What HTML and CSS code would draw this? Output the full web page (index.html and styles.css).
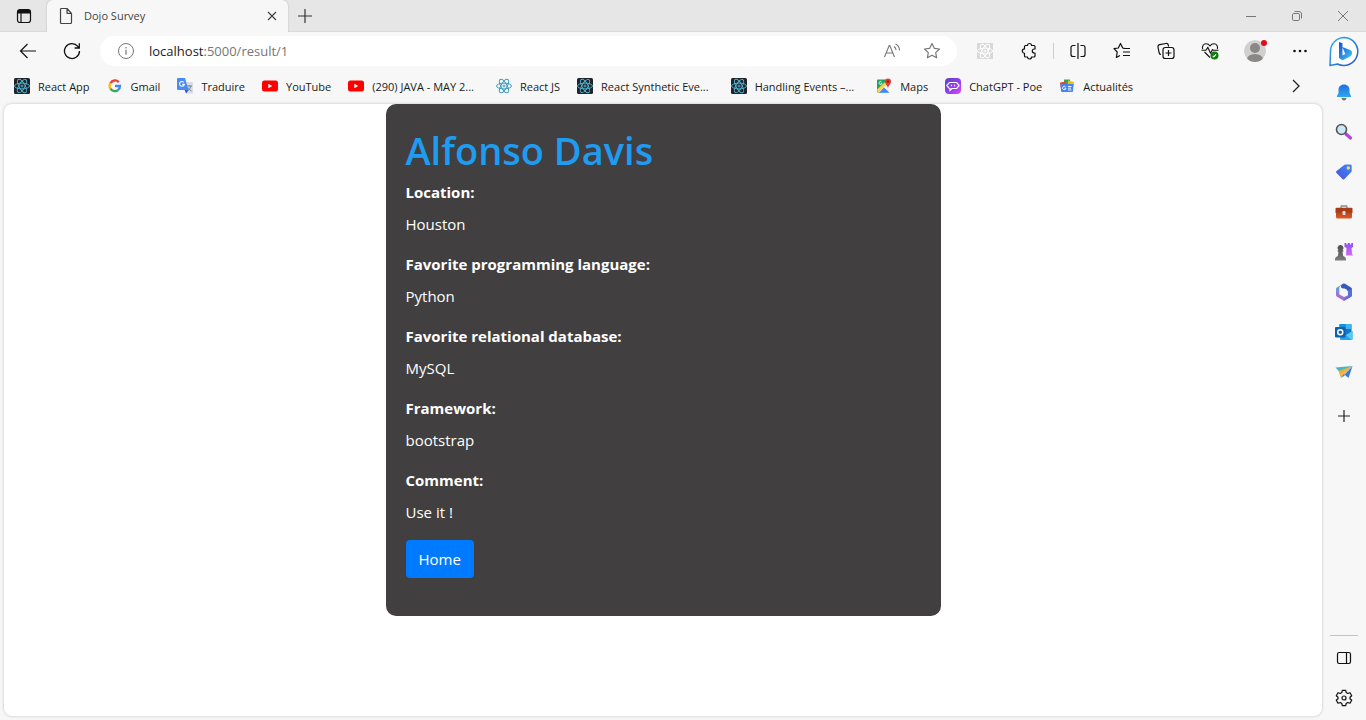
FILE: index.html
```html
<!DOCTYPE html>
<html lang="en">
<head>
<meta charset="utf-8">
<title>Dojo Survey</title>
<link rel="stylesheet" href="styles.css">
</head>
<body>
<svg class="defs" aria-hidden="true">
  <defs>
    <g id="atom" fill="none">
      <ellipse cx="8" cy="8" rx="7.500" ry="2.900"/>
      <ellipse cx="8" cy="8" rx="7.500" ry="2.900" transform="rotate(60 8 8)"/>
      <ellipse cx="8" cy="8" rx="7.500" ry="2.900" transform="rotate(120 8 8)"/>
      <circle cx="8" cy="8" r="1"/>
    </g>
    <g id="react-dark"><rect width="16" height="16" rx="1.500" fill="#20232a"/><use href="#atom" stroke="#53b4d0" stroke-width=".9"/></g>
    <g id="youtube"><rect y="2.500" width="16" height="11" rx="2.500" fill="#f00"/><path d="M6.300 5.700v4.600L10.300 8z" fill="#fff"/></g>
    <linearGradient id="bing-ring" x1="0" y1="0" x2="1" y2="1"><stop stop-color="#2fb4e8"/><stop offset="1" stop-color="#2952cc"/></linearGradient>
    <linearGradient id="bing-b" x1="0" y1="0" x2="1" y2="1"><stop stop-color="#1a4fc4"/><stop offset=".5" stop-color="#2b8ae6"/><stop offset="1" stop-color="#3fd0ee"/></linearGradient>
    <linearGradient id="blue" x1="0" y1="0" x2="0" y2="1"><stop stop-color="#1f6fe0"/><stop offset="1" stop-color="#2da7ee"/></linearGradient>
    <linearGradient id="tag" x1="1" y1="0" x2="0" y2="1"><stop stop-color="#3f8cf5"/><stop offset="1" stop-color="#4a4fe0"/></linearGradient>
    <linearGradient id="poe" x1="0" y1="0" x2="1" y2="1"><stop stop-color="#5b45c9"/><stop offset=".6" stop-color="#9a3cf0"/><stop offset="1" stop-color="#e04bf0"/></linearGradient>
    <linearGradient id="rook" x1="0" y1="0" x2="0" y2="1"><stop stop-color="#8d4df0"/><stop offset="1" stop-color="#d36bf5"/></linearGradient>
    <linearGradient id="pawn" x1="0" y1="0" x2="0" y2="1"><stop stop-color="#4d4d4d"/><stop offset="1" stop-color="#7c7c7c"/></linearGradient>
    <linearGradient id="case" x1="0" y1="0" x2="0" y2="1"><stop stop-color="#b8461f"/><stop offset="1" stop-color="#dc5a22"/></linearGradient>
  </defs>
</svg>
<div class="browser">
  <header class="titlebar">
    <button class="tab-actions" aria-label="Tab actions"><svg width="16" height="16" viewBox="0 0 16 16"><rect x="1.500" y="1.500" width="13" height="13" rx="2.500" fill="none" stroke="#111" stroke-width="1.200"/><path d="M1.500 5.500V4A2.500 2.500 0 0 1 4 1.500h8A2.500 2.500 0 0 1 14.500 4v1.500z" fill="#111"/><path d="M5 5v9.500" stroke="#111" stroke-width="1.200"/></svg></button>
    <div class="tab">
      <svg width="16" height="18" viewBox="0 0 16 18" fill="none" stroke="#444" stroke-width="1.200" stroke-linejoin="round"><path d="M3.500 1.500H9l4.500 4.800v9.200a1 1 0 0 1-1 1h-9a1 1 0 0 1-1-1v-13a1 1 0 0 1 1-1zM9 1.500v4.800h4.500"/></svg>
      <span class="tab-title">Dojo Survey</span>
      <button class="tab-close" aria-label="Close tab"><svg width="10" height="10" viewBox="0 0 10 10" stroke="#444" stroke-width="1.200"><path d="M1 1l8 8M9 1L1 9"/></svg></button>
    </div>
    <button class="new-tab" aria-label="New tab"><svg width="14" height="14" viewBox="0 0 14 14" stroke="#333" stroke-width="1.200"><path d="M7 0v14M0 7h14"/></svg></button>
    <div class="window-controls">
      <button aria-label="Minimize"><svg width="12" height="12" viewBox="0 0 12 12" stroke="#777"><path d="M1 6.500h10"/></svg></button>
      <button aria-label="Restore"><svg width="12" height="12" viewBox="0 0 12 12" fill="none" stroke="#777"><rect x="1.500" y="3.500" width="7" height="7" rx="1.300"/><path d="M3.500 1.500H8a2.500 2.500 0 0 1 2.500 2.500v4.500"/></svg></button>
      <button aria-label="Close"><svg width="12" height="12" viewBox="0 0 12 12" stroke="#777"><path d="M1 1l10 10M11 1L1 11"/></svg></button>
    </div>
  </header>

  <div class="frame">
    <div class="main">
      <nav class="toolbar" aria-label="Navigation">
        <button class="tool" aria-label="Back"><svg width="18" height="16" viewBox="0 0 18 16" fill="none" stroke="#111" stroke-width="1.200"><path d="M17 8H1.500M8.500 1L1.500 8l7 7"/></svg></button>
        <button class="tool" aria-label="Refresh"><svg width="18" height="18" viewBox="0 0 18 18" fill="none" stroke="#111" stroke-width="1.300"><path d="M16.500 9A7.500 7.500 0 1 1 14.800 4.300L16 5.800M16.300 1.300V6h-4.700"/></svg></button>
        <div class="address">
          <svg width="18" height="18" viewBox="0 0 18 18" fill="none" stroke="#777"><circle cx="9" cy="9" r="7.500"/><path d="M9 7.800v5M9 5v1.400" stroke-width="1.200"/></svg>
          <div class="url" role="textbox" aria-label="Address" tabindex="0">localhost<span class="url-rest">:5000/result/1</span></div>
          <button aria-label="Read aloud"><svg width="18" height="16" viewBox="0 0 18 16" fill="none" stroke="#777" stroke-width="1.100"><path d="M1.500 14L6.200 2.500h.6L11.500 14M3.200 10h6.600M11 3.500Q13 5 13 7M12.500 1Q16.500 3 16.500 7.500"/></svg></button>
          <button aria-label="Add to favorites"><svg width="18" height="18" viewBox="0 0 18 18" fill="none" stroke="#777" stroke-width="1.200" stroke-linejoin="round"><path d="M9 1.500l2.300 4.800 5.200.7-3.800 3.600.9 5.200L9 13.300l-4.600 2.500.9-5.200L1.500 7l5.200-.7z"/></svg></button>
        </div>
        <button class="tool" aria-label="React Developer Tools"><svg width="16" height="16" viewBox="0 0 16 16"><rect width="16" height="16" fill="#d8d8d8"/><use href="#atom" stroke="#fff"/></svg></button>
        <button class="tool" aria-label="Extensions"><svg width="18" height="18" viewBox="0 0 18 18" fill="none" stroke="#111" stroke-width="1.200" stroke-linejoin="round"><path d="M5.500 3.500h2a2 2 0 0 1 4 0H14a1 1 0 0 1 1 1V7h-.7a2 2 0 0 0 0 4h.7v3a1 1 0 0 1-1 1h-2.500a2 2 0 0 1-4 0h-2a1 1 0 0 1-1-1v-2.700a2.200 2.200 0 0 1 0-4.400V4.500a1 1 0 0 1 1-1z"/></svg></button>
        <span class="divider"></span>
        <button class="tool" aria-label="Split screen"><svg width="18" height="16" viewBox="0 0 18 16" fill="none" stroke="#111" stroke-width="1.200"><path d="M9 0v16M6.500 2.500H4A2 2 0 0 0 2 4.500v7a2 2 0 0 0 2 2h2.500M11.500 2.500H14a2 2 0 0 1 2 2v7a2 2 0 0 1-2 2h-2.500"/></svg></button>
        <button class="tool" aria-label="Favorites"><svg width="18" height="18" viewBox="0 0 18 18" fill="none" stroke="#111" stroke-width="1.200" stroke-linejoin="round"><path d="M12.500 6.500L9.700 6 7.500 1.500 5.300 6l-4.300.7 3.200 3.300-.8 5.500L7 13.500M10.500 6.500H17M10 10h7M10 13.500h7"/></svg></button>
        <button class="tool" aria-label="Collections"><svg width="18" height="18" viewBox="0 0 18 18" fill="none" stroke="#111" stroke-width="1.200"><path d="M4 12.500A2 2 0 0 1 2.200 11L1 5a2 2 0 0 1 1.600-2.300L9 1.500a2 2 0 0 1 2.300 1.600l.3 1.400"/><rect x="6" y="5.500" width="11" height="11" rx="2.300"/><path d="M11.500 8v6M8.500 11h6"/></svg></button>
        <button class="tool" aria-label="Browser essentials"><svg width="18" height="18" viewBox="0 0 18 18" fill="none" stroke="#111" stroke-width="1.100" stroke-linejoin="round"><path d="M1.700 7C.8 4.500 2.300 1.800 5 1.800c2 0 3.200 1 4 2.200.8-1.200 2-2.200 4-2.200 2.700 0 4.200 2.700 3.300 5.200M3.500 10L9 15.500M.5 8.300H5l1.800-3 2.700 6 2-3.800.8.800H17.500"/><circle cx="13.500" cy="13.500" r="4" fill="#107c10" stroke="none"/><path d="M11.800 13.800l1 1 2.200-2.500" stroke="#fff"/></svg></button>
        <button class="tool profile" aria-label="Profile"><svg width="26" height="26" viewBox="-1 1 26 26"><clipPath id="face"><circle cx="12" cy="14" r="11"/></clipPath><g clip-path="url(#face)"><circle cx="12" cy="14" r="11" fill="#d2d0ce"/><circle cx="12" cy="11" r="5" fill="#8a8886"/><ellipse cx="12" cy="22.500" rx="8" ry="5.500" fill="#8a8886"/></g><circle cx="21" cy="6" r="3" fill="#e00b1c"/></svg></button>
        <button class="tool" aria-label="Settings and more"><svg width="16" height="4" viewBox="0 0 16 4" fill="#111"><circle cx="2.500" cy="2" r="1.300"/><circle cx="8" cy="2" r="1.300"/><circle cx="13.500" cy="2" r="1.300"/></svg></button>
      </nav>

      <nav class="bookmarks" aria-label="Favorites bar">
        <a href="#"><svg viewBox="0 0 16 16"><use href="#react-dark"/></svg>React App</a>
        <a href="#"><svg viewBox="0 0 16 16" fill="none" stroke-width="2.300"><path d="M3.500 5.300A5 5 0 0 1 11.800 4.200" stroke="#ea4335"/><path d="M3.500 5.200a5 5 0 0 0 0 5.600" stroke="#fbbc05"/><path d="M3.500 10.600A5 5 0 0 0 11.200 11.800" stroke="#34a853"/><path d="M8 8h5a5 5 0 0 1-1.900 3.900" stroke="#4285f4"/></svg>Gmail</a>
        <a href="#"><svg viewBox="0 0 16 16"><path d="M6 4h9a1 1 0 0 1 1 1v10.500H9z" fill="#dadce0"/><path d="M9.500 8h5.500M12.300 7v1M14 8q-1 3-3.500 5M11 9.500q1.500 2.500 3.500 3.500" fill="none" stroke="#5f7d9c" stroke-width=".9"/><path d="M1 0h7l3.500 12H1a1 1 0 0 1-1-1V1a1 1 0 0 1 1-1z" fill="#4a8af4"/><path d="M7.500 12h4L9.200 15.500z" fill="#3557c9"/><path d="M6.800 4.300A2.400 2.400 0 1 0 7.300 6.300H5" fill="none" stroke="#fff" stroke-width="1.100"/></svg>Traduire</a>
        <a href="#"><svg viewBox="0 0 16 16"><use href="#youtube"/></svg>YouTube</a>
        <a class="long" href="#"><svg viewBox="0 0 16 16"><use href="#youtube"/></svg>(290) JAVA - MAY 2...</a>
        <a href="#"><svg viewBox="0 0 16 16"><use href="#atom" stroke="#3f9dbb"/></svg>React JS</a>
        <a class="long" href="#"><svg viewBox="0 0 16 16"><use href="#react-dark"/></svg>React Synthetic Eve...</a>
        <a class="long" href="#"><svg viewBox="0 0 16 16"><use href="#react-dark"/></svg>Handling Events –...</a>
        <a href="#"><svg viewBox="0 0 16 16"><path d="M2 1.500h11v13H2a1 1 0 0 1-1-1v-11a1 1 0 0 1 1-1z" fill="#1ea362"/><path d="M1.500 14L13 3v12z" fill="#f1f1f1"/><path d="M1 11.500L9.500 3.500l2 2L2 15z" fill="#fbd24b"/><path d="M3 14.800L8 9.500l5.500 5.300z" fill="#4285f4"/><path d="M5.500 3.800a1.500 1.500 0 1 0 .5 1.400H4.700" fill="none" stroke="#fff" stroke-width=".8"/><path d="M12 10.500C11.500 7 9 6 9 3.500a3 3 0 0 1 6 0C15 6 12.500 7 12 10.500z" fill="#e53935"/><circle cx="12" cy="3.500" r="1.100" fill="#811411"/></svg>Maps</a>
        <a href="#"><svg viewBox="0 0 16 16"><rect width="16" height="16" rx="4" fill="url(#poe)"/><path d="M5 4.500h6a1.500 1.500 0 0 1 1.500 1.500 1.500 1.500 0 0 1 0 3A1.500 1.500 0 0 1 11 10.500H7L5 12.300v-1.800A1.500 1.500 0 0 1 3.500 9a1.500 1.500 0 0 1 0-3A1.500 1.500 0 0 1 5 4.500z" fill="none" stroke="#fff" stroke-width="1.200"/><path d="M6.500 6.700v1.600M9.500 6.700v1.600" stroke="#fff" stroke-width="1.200"/></svg>ChatGPT - Poe</a>
        <a href="#"><svg viewBox="0 0 16 16"><path d="M5 1.500h6v6H5z" fill="#34a853"/><path d="M1 4.500l6-1v6H1.500z" fill="#ea4335"/><path d="M9 2.500l6 1.500-.5 5H9z" fill="#fbbc05"/><path d="M1.500 6h13L14 13a1 1 0 0 1-1 1H3a1 1 0 0 1-1-1z" fill="#4285f4"/><path d="M6.500 8.800a1.700 1.700 0 1 0 .5 1.500H5.500M9 8.500h3.500M9 10.200h3M9 12h3.500" fill="none" stroke="#fff" stroke-width=".9"/></svg>Actualités</a>
        <button class="more" aria-label="More favorites"><svg width="8" height="14" viewBox="0 0 8 14" fill="none" stroke="#222" stroke-width="1.300"><path d="M1 1l6 6-6 6"/></svg></button>
      </nav>

      <main class="page">
        <div class="container">
          <section class="card">
            <h1>Alfonso Davis</h1>
            <dl>
              <dt>Location:</dt><dd>Houston</dd>
              <dt>Favorite programming language:</dt><dd>Python</dd>
              <dt>Favorite relational database:</dt><dd>MySQL</dd>
              <dt>Framework:</dt><dd>bootstrap</dd>
              <dt>Comment:</dt><dd>Use it !</dd>
            </dl>
            <a class="home" href="#">Home</a>
          </section>
        </div>
      </main>
    </div>

    <aside class="sidebar" aria-label="Sidebar">
      <button class="bing" aria-label="Bing Chat"><svg width="32" height="32" viewBox="0 0 32 32"><path d="M16.500 1.500A14 14 0 1 1 9.500 28L2 29.500 2.500 16A14 14 0 0 1 16.500 1.500z" fill="#fff" stroke="url(#bing-ring)" stroke-width="1.500" stroke-linejoin="round"/><path d="M11 6l3.500 1.300v12.200l2.800-1.500-2-4.700-1-2.300 8 3q1.800 1 1.800 3t-2 3.500l-7.600 3.800L11 22z" fill="url(#bing-b)"/></svg></button>
      <button aria-label="Notifications"><svg viewBox="0 0 18 18"><path d="M9 1.500c3.300 0 5.500 2.300 5.500 5.500v3l1.500 3a.7.700 0 0 1-.7 1H2.700A.7.700 0 0 1 2 13l1.500-3V7c0-3.200 2.200-5.500 5.500-5.500z" fill="url(#blue)"/><path d="M6.500 15h5a2.500 2.500 0 0 1-5 0z" fill="#69757c"/></svg></button>
      <button aria-label="Search"><svg viewBox="0 0 18 18"><path d="M11 11l4.500 4" stroke="#b344d6" stroke-width="3.200" stroke-linecap="round"/><circle cx="6.500" cy="6.500" r="5" fill="#c9e8fa" stroke="#555" stroke-width="1.600"/></svg></button>
      <button aria-label="Shopping"><svg viewBox="0 0 18 18"><path d="M10.500 1.500h5a1.200 1.200 0 0 1 1.200 1.200v5.200q0 .7-.5 1.200l-6.700 6.800q-1 1-2 0L1.500 10q-1-1 0-2l7.700-6q.5-.5 1.300-.5z" fill="url(#tag)"/><circle cx="13.300" cy="5" r="1.700" fill="#ffd45e"/></svg></button>
      <button aria-label="Tools"><svg viewBox="0 0 18 18"><path d="M6 5V3.700Q6 3 6.700 3h4.600q.7 0 .7.700V5" fill="none" stroke="#888" stroke-width="1.300"/><path d="M1.500 4.700h15a1 1 0 0 1 1 1V10H.5V5.700a1 1 0 0 1 1-1z" fill="#a63c19"/><path d="M1 9.500h16V14a1.500 1.500 0 0 1-1.500 1.500h-13A1.500 1.500 0 0 1 1 14z" fill="url(#case)"/><rect x="7.500" y="8" width="3" height="4" rx=".7" fill="#dedede"/></svg></button>
      <button aria-label="Games"><svg viewBox="0 0 18 18"><path d="M9.500 0h1.800v1.500h1.500V0h2v1.500h1.500V0h1.700v4l-1.500 1 .5 5.500 1 2h-7l.5-7.500-2-1z" fill="url(#rook)"/><path d="M5.500 2a3 3 0 0 1 2 5.200h.8v1.500H7.500l.7 4.300q2.800.8 2.800 3V17.500H0V16q0-2.200 2.800-3l.7-4.300h-.8V7.200h.8A3 3 0 0 1 5.500 2z" fill="url(#pawn)"/></svg></button>
      <button aria-label="Microsoft 365"><svg viewBox="0 0 18 18"><path d="M9.500.5L5.300 2.900Q4.300 3.500 4.300 4.700v7.800L1.700 11Q1 10.500 1 9.500V6q0-1 .8-1.500L7.500 1z" fill="#6a9bd6"/><path d="M8 .8q1-.6 2 0l6 3.600q1 .6 1 1.700v6q0 1.100-1 1.700l-3 1.700v-7L6 4.400V2.500z" fill="#345cc0"/><path d="M1 8.500V12q0 1.100 1 1.700l6 3.500q1 .6 2 0l3-1.800v-3.200L9 14 4.500 11.400z" fill="#a46fda"/><path d="M13 7.300l4-1.300v6q0 1.100-1 1.700l-6 3.500q-1 .6-2 0l5-4z" fill="#5a6fd6"/><path d="M9 5.200l3.300 1.900v3.800L9 12.800l-3.300-1.900V7.100z" fill="#f7f7f7"/></svg></button>
      <button aria-label="Outlook"><svg viewBox="0 0 18 18"><rect x="4.500" y="1" width="12" height="13" rx="1" fill="#1a73c8"/><path d="M10.500 1h6v5h-6z" fill="#41b5ea"/><path d="M4.500 1h6v5h-6z" fill="#1490df"/><path d="M5 9l6 3 6.500-4v8a1 1 0 0 1-1 1H6a1 1 0 0 1-1-1z" fill="#2aa2e8"/><path d="M11 12l6.500-4v8q0 1-1 1z" fill="#50cbf5"/><rect y="4" width="10.500" height="10.500" rx="1" fill="#0a62b5"/><circle cx="5.250" cy="9.250" r="2.500" fill="none" stroke="#fff" stroke-width="1.500"/></svg></button>
      <button aria-label="Drop"><svg viewBox="0 0 18 18"><path d="M.5 4.500L17.500 3 6 10.500z" fill="#45b5ca"/><path d="M3.500 8L17.500 3 6 10.500V15z" fill="#f4ad29"/><path d="M17.500 3l-4 12-4-3.500z" fill="#3579e0"/><path d="M17.500 3L6 15v-4.500z" fill="#efb64c"/><path d="M9 11l-3 4 4-2.700z" fill="#4478b8"/></svg></button>
      <button class="add" aria-label="Customize"><svg viewBox="0 0 18 18" stroke="#222" stroke-width="1.200"><path d="M9 3v12M3 9h12"/></svg></button>
      <div class="sidebar-end">
        <button aria-label="Hide sidebar"><svg viewBox="0 0 18 18" fill="none" stroke="#111" stroke-width="1.200"><rect x="2.500" y="3.500" width="13" height="11" rx="1.700"/><path d="M11.500 3.500v11"/></svg></button>
        <button aria-label="Settings"><svg viewBox="0 0 18 18" fill="none" stroke="#111" stroke-width="1.200" stroke-linejoin="round"><path d="M7.300 1.300h3.400l.5 2.300 1.500.9 2.300-.8 1.700 3L15 8.300v1.400l1.700 1.600-1.700 3-2.300-.8-1.500.9-.5 2.300H7.300l-.5-2.300-1.500-.9-2.300.8-1.700-3L3 9.700V8.300L1.300 6.700 3 3.700l2.300.8 1.500-.9z"/><circle cx="9" cy="9" r="2"/></svg></button>
      </div>
    </aside>
  </div>
</div>
</body>
</html>
```
FILE: styles.css
```css
* { box-sizing: border-box; }
body {
  margin: 0;
  font-family: "Open Sans", "Noto Sans", sans-serif;
  color: #1b1b1b;
  background: #f7f7f7;
}
button {
  display: flex;
  align-items: center;
  justify-content: center;
  padding: 0;
  border: 0;
  background: none;
}
svg { display: block; flex: none; }
.defs { position: absolute; width: 0; height: 0; }

.browser { display: flex; flex-direction: column; min-height: 100vh; }
.titlebar { display: flex; height: 32px; background: #e6e6e6; box-shadow: inset 0 -1px #d9d9d9; }
.tab-actions { width: 47px; }
.tab {
  display: flex;
  align-items: center;
  gap: 10px;
  width: 241px;
  padding: 0 11px;
  border-radius: 6px 6px 0 0;
  background: #f7f7f7;
  box-shadow: 0 0 2px #b5b5b5;
  clip-path: inset(0 -3px 0 -3px);
  color: #444;
  font-size: 11px;
}
.tab-title { flex: 1; padding-bottom: 1px; }
.new-tab { width: 34px; }
.window-controls { display: flex; margin-left: auto; }
.window-controls button { width: 46px; }

.frame { display: flex; flex: 1; }
.main { display: flex; flex: 1; flex-direction: column; min-width: 0; }
.toolbar { display: flex; align-items: center; height: 38px; padding: 0 0 0 6px; }
.tool { width: 44px; height: 36px; }
.profile { width: 46px; }
.address {
  display: flex;
  flex: 1;
  align-items: center;
  height: 30px;
  margin: 0 6px;
  padding: 0 5px 0 17px;
  border-radius: 15px;
  background: #fff;
}
.address button { width: 40px; height: 30px; }
.url { flex: 1; padding-left: 14px; font-size: 13px; }
.url-rest { color: #767676; }
.divider { width: 1px; height: 16px; margin: 0 2px; background: #ccc; }

.bookmarks { display: flex; align-items: center; gap: 17px; height: 32px; padding: 0 18px 0 14px; }
.bookmarks a {
  display: flex;
  align-items: center;
  gap: 8px;
  color: #1b1b1b;
  font-size: 11px;
  white-space: nowrap;
  text-decoration: none;
}
.bookmarks .long { padding-right: 5px; }
.bookmarks svg { width: 16px; height: 16px; }
.bookmarks .more { width: 16px; height: 24px; margin-left: auto; }
.bookmarks .more svg { width: 8px; height: 14px; }

.page {
  flex: 1;
  margin: 2px 0 4px 4px;
  border-radius: 8px;
  background: #fff;
  box-shadow: 0 0 3px #bdbdbd;
}
.container { display: flex; justify-content: center; max-width: 1110px; margin: 0 auto; }
.card {
  width: 50%;
  padding: 22px 20px 38px;
  border-radius: 10px;
  background: #413f40;
  color: #fff;
  font-size: 15px;
  line-height: 24px;
}
.card h1 { margin: 0 0 6px; color: #1f9bf0; font-size: 38px; font-weight: 600; line-height: 48px; }
.card dl { margin: 0; }
.card dt { margin-bottom: 8px; font-weight: 700; }
.card dd { margin: 0 0 16px; }
.home {
  display: inline-block;
  padding: 7px 13px;
  border-radius: 4px;
  background: #007bff;
  color: #fff;
  text-decoration: none;
  vertical-align: top;
}

.sidebar { display: flex; flex-direction: column; width: 44px; }
.sidebar button { width: 44px; height: 40px; }
.sidebar svg { width: 18px; height: 18px; }
.sidebar .bing svg { width: 32px; height: 32px; }
.sidebar .add { margin-top: 4px; }
.sidebar-end { margin-top: auto; padding: 2px 0; }
.sidebar-end::before { content: ""; display: block; height: 1px; margin: 0 8px 2px; background: #c4c4c4; }
```
